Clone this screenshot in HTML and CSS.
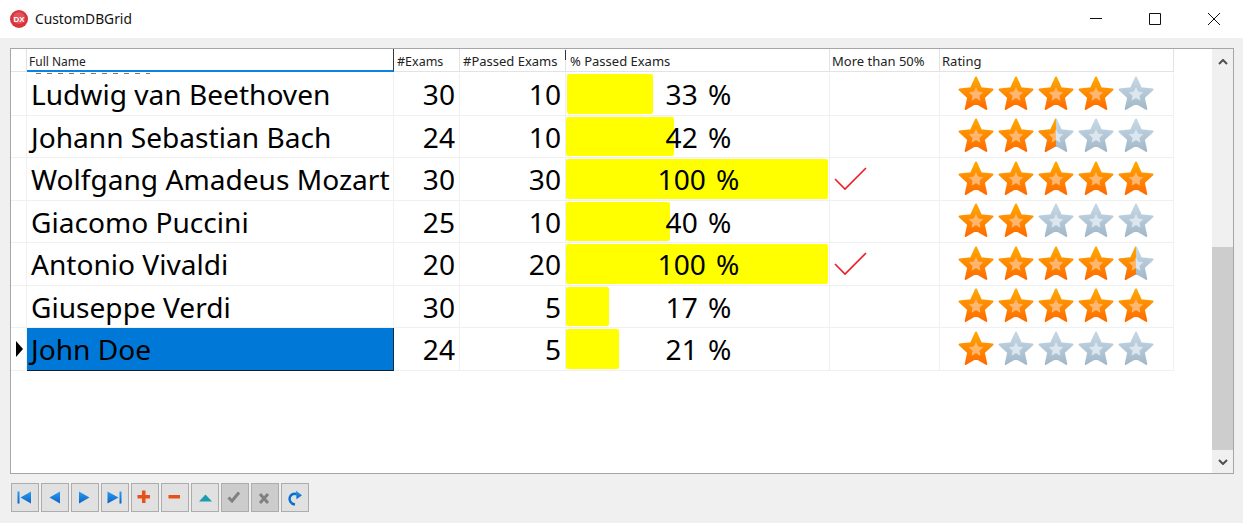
FILE: index.html
```html
<!DOCTYPE html>
<html lang="en">
<head>
<meta charset="utf-8">
<title>CustomDBGrid</title>
<link rel="stylesheet" href="styles.css">
</head>
<body>
<svg class="sprite" aria-hidden="true">
  <defs>
    <linearGradient id="gold" x1="0" y1="0" x2="0" y2="1"><stop offset="0" stop-color="#ffa800"/><stop offset="1" stop-color="#ff6c00"/></linearGradient>
    <linearGradient id="steel" x1="0" y1="0" x2="0" y2="1"><stop offset="0" stop-color="#c6d8e6"/><stop offset="1" stop-color="#a2b8c8"/></linearGradient>
    <linearGradient id="blue" x1="0" y1="0" x2="0" y2="1"><stop offset="0" stop-color="#2a9df0"/><stop offset="1" stop-color="#0a62c4"/></linearGradient>
    <clipPath id="lefthalf"><rect x="0" y="0" width="18" height="36"/></clipPath>
    <symbol id="star-on" viewBox="0 0 36 36">
      <path class="star-body-on" d="M18 1.500l5 10.800 11.500 1.300-8.700 7.800 2.500 11.600L18 27l-10.300 6 2.500-11.600-8.700-7.800L13 12.300z"/>
      <path fill="#ffb66f" d="M18 11l2.200 4.600 5 .7-3.700 3.400 1 5-4.500-2.600-4.500 2.600 1-5-3.700-3.400 5-.7z"/>
    </symbol>
    <symbol id="star-off" viewBox="0 0 36 36">
      <path class="star-body-off" d="M18 1.500l5 10.800 11.500 1.300-8.700 7.800 2.500 11.600L18 27l-10.300 6 2.500-11.600-8.700-7.800L13 12.300z"/>
      <path fill="#dbe6ee" d="M18 11l2.200 4.600 5 .7-3.700 3.400 1 5-4.500-2.600-4.500 2.600 1-5-3.700-3.400 5-.7z"/>
    </symbol>
    <symbol id="star-half" viewBox="0 0 36 36">
      <use href="#star-off" width="36" height="36"/>
      <g clip-path="url(#lefthalf)"><use href="#star-on" width="36" height="36"/></g>
    </symbol>
  </defs>
</svg>

<header class="titlebar">
  <svg class="app-icon" viewBox="0 0 18 18"><circle cx="9" cy="9" r="9" fill="#d8343c"/><circle cx="9" cy="8" r="6" fill="#e4525a"/><text x="9" y="11.500" class="app-icon-text">DX</text></svg>
  <span class="title">CustomDBGrid</span>
  <div class="win-controls">
    <svg class="win-btn" viewBox="0 0 12 12"><path d="M0 5.500h12" /></svg>
    <svg class="win-btn" viewBox="0 0 12 12"><path d="M.5.500h11v11H.5z" /></svg>
    <svg class="win-btn" viewBox="0 0 12 12"><path d="M0 0l12 12M12 0L0 12" /></svg>
  </div>
</header>

<main class="main">
  <section class="gridbox">
    <div class="table">
      <div class="row head">
        <div class="cell"></div>
        <div class="cell name-head">Full Name</div>
        <div class="cell exams-head">#Exams</div>
        <div class="cell">#Passed Exams</div>
        <div class="cell pct-head">% Passed Exams</div>
        <div class="cell tight">More than 50%</div>
        <div class="cell tight">Rating</div>
      </div>

      <div class="row">
        <div class="cell"></div><div class="cell name">Ludwig van Beethoven</div><div class="cell num">30</div><div class="cell num">10</div>
        <div class="cell pct first"><span class="bar" style="width:86px"></span><span class="pct-text">33 %</span></div>
        <div class="cell"></div>
        <div class="cell stars"><svg class="star"><use href="#star-on"/></svg><svg class="star"><use href="#star-on"/></svg><svg class="star"><use href="#star-on"/></svg><svg class="star"><use href="#star-on"/></svg><svg class="star"><use href="#star-off"/></svg></div>
      </div>

      <div class="row">
        <div class="cell"></div><div class="cell name">Johann Sebastian Bach</div><div class="cell num">24</div><div class="cell num">10</div>
        <div class="cell pct"><span class="bar" style="width:108px"></span><span class="pct-text">42 %</span></div>
        <div class="cell"></div>
        <div class="cell stars"><svg class="star"><use href="#star-on"/></svg><svg class="star"><use href="#star-on"/></svg><svg class="star"><use href="#star-half"/></svg><svg class="star"><use href="#star-off"/></svg><svg class="star"><use href="#star-off"/></svg></div>
      </div>

      <div class="row">
        <div class="cell"></div><div class="cell name">Wolfgang Amadeus Mozart</div><div class="cell num">30</div><div class="cell num">30</div>
        <div class="cell pct"><span class="bar" style="width:262px"></span><span class="pct-text">100 %</span></div>
        <div class="cell check"><svg class="tick" viewBox="0 0 34 24"><path d="M1 12l10 10L32 1"/></svg></div>
        <div class="cell stars"><svg class="star"><use href="#star-on"/></svg><svg class="star"><use href="#star-on"/></svg><svg class="star"><use href="#star-on"/></svg><svg class="star"><use href="#star-on"/></svg><svg class="star"><use href="#star-on"/></svg></div>
      </div>

      <div class="row">
        <div class="cell"></div><div class="cell name">Giacomo Puccini</div><div class="cell num">25</div><div class="cell num">10</div>
        <div class="cell pct"><span class="bar" style="width:104px"></span><span class="pct-text">40 %</span></div>
        <div class="cell"></div>
        <div class="cell stars"><svg class="star"><use href="#star-on"/></svg><svg class="star"><use href="#star-on"/></svg><svg class="star"><use href="#star-off"/></svg><svg class="star"><use href="#star-off"/></svg><svg class="star"><use href="#star-off"/></svg></div>
      </div>

      <div class="row">
        <div class="cell"></div><div class="cell name">Antonio Vivaldi</div><div class="cell num">20</div><div class="cell num">20</div>
        <div class="cell pct"><span class="bar" style="width:262px"></span><span class="pct-text">100 %</span></div>
        <div class="cell check"><svg class="tick" viewBox="0 0 34 24"><path d="M1 12l10 10L32 1"/></svg></div>
        <div class="cell stars"><svg class="star"><use href="#star-on"/></svg><svg class="star"><use href="#star-on"/></svg><svg class="star"><use href="#star-on"/></svg><svg class="star"><use href="#star-on"/></svg><svg class="star"><use href="#star-half"/></svg></div>
      </div>

      <div class="row">
        <div class="cell"></div><div class="cell name">Giuseppe Verdi</div><div class="cell num">30</div><div class="cell num">5</div>
        <div class="cell pct"><span class="bar" style="width:43px"></span><span class="pct-text">17 %</span></div>
        <div class="cell"></div>
        <div class="cell stars"><svg class="star"><use href="#star-on"/></svg><svg class="star"><use href="#star-on"/></svg><svg class="star"><use href="#star-on"/></svg><svg class="star"><use href="#star-on"/></svg><svg class="star"><use href="#star-on"/></svg></div>
      </div>

      <div class="row">
        <div class="cell indicator"><svg class="pointer" viewBox="0 0 7 16"><path d="M0 0l7 8-7 8z"/></svg></div><div class="cell name selected">John Doe</div><div class="cell num">24</div><div class="cell num">5</div>
        <div class="cell pct"><span class="bar" style="width:53px"></span><span class="pct-text">21 %</span></div>
        <div class="cell"></div>
        <div class="cell stars"><svg class="star"><use href="#star-on"/></svg><svg class="star"><use href="#star-off"/></svg><svg class="star"><use href="#star-off"/></svg><svg class="star"><use href="#star-off"/></svg><svg class="star"><use href="#star-off"/></svg></div>
      </div>
    </div>

    <div class="scrollbar">
      <div class="sb-btn"><svg class="sb-arrow" viewBox="0 0 10 6"><path d="M1 5l4-4 4 4"/></svg></div>
      <div class="sb-gap"></div>
      <div class="sb-thumb"></div>
      <div class="sb-btn sb-end"><svg class="sb-arrow" viewBox="0 0 10 6"><path d="M1 1l4 4 4-4"/></svg></div>
    </div>
  </section>

  <nav class="navigator">
    <button class="nav-btn"><svg class="nav-icon" viewBox="0 0 16 16"><path class="i-blue" d="M.5 1.500h2v12h-2zM14 1.500v12L3.500 7.500z"/></svg></button>
    <button class="nav-btn"><svg class="nav-icon" viewBox="0 0 16 16"><path class="i-blue" d="M13 1.500v12L2.500 7.500z"/></svg></button>
    <button class="nav-btn"><svg class="nav-icon" viewBox="0 0 16 16"><path class="i-blue" d="M2 1.500v12L12.500 7.500z"/></svg></button>
    <button class="nav-btn"><svg class="nav-icon" viewBox="0 0 16 16"><path class="i-blue" d="M.5 1.500v12L11.500 7.500zM12.500 1.500h2v12h-2z"/></svg></button>
    <button class="nav-btn"><svg class="nav-icon" viewBox="0 0 16 16"><path class="i-red" d="M5 .5h3.500V5H13v3.500H8.500V13H5V8.500H.5V5H5z"/></svg></button>
    <button class="nav-btn"><svg class="nav-icon" viewBox="0 0 16 16"><path class="i-red" d="M1.500 5H13v3.500H1.500z"/></svg></button>
    <button class="nav-btn"><svg class="nav-icon" viewBox="0 0 16 16"><path class="i-teal" d="M8.500 4.500L15 11.500H2z"/></svg></button>
    <button class="nav-btn off"><svg class="nav-icon" viewBox="0 0 16 16"><path class="i-grey" d="M1.500 7.500L5 11l7-8.500" /></svg></button>
    <button class="nav-btn off"><svg class="nav-icon" viewBox="0 0 16 16"><path class="i-grey" d="M3 4l8 9M11 4l-8 9" /></svg></button>
    <button class="nav-btn"><svg class="nav-icon" viewBox="0 0 16 16"><path class="i-arc" d="M8 14.500C3.500 14 1.500 10 3 6.800 4.300 4 7.500 3 10 4.500"/><path class="i-blue" d="M9 .8l6 4.400-5.500 4z"/></svg></button>
  </nav>
</main>
</body>
</html>
```

FILE: styles.css
```css
* { box-sizing: border-box; }

html, body {
  margin: 0;
  height: 100%;
}

body {
  width: 1243px;
  height: 523px;
  overflow: hidden;
  background: #f0f0f0;
  color: #000;
  font-family: "Noto Sans", "Open Sans", sans-serif;
}

.sprite {
  display: block;
  width: 0;
  height: 0;
}

/* Title bar */
.titlebar {
  display: flex;
  align-items: center;
  height: 38px;
  padding-left: 10px;
  background: #fff;
}

.app-icon {
  width: 18px;
  height: 18px;
}

.app-icon-text {
  font-family: "Liberation Sans", sans-serif;
  font-size: 8px;
  font-weight: 700;
  fill: #fff;
  text-anchor: middle;
}

.title {
  margin-left: 7px;
  padding-bottom: 2px;
  font-size: 13.800px;
  color: #111;
}

.win-controls {
  display: flex;
  gap: 47px;
  margin-left: auto;
  padding-right: 23px;
}

.win-btn {
  width: 12px;
  height: 12px;
  fill: none;
  stroke: #111;
  stroke-width: 1;
}

/* Main area */
.main {
  padding: 10px 9px 0 10px;
}

.gridbox {
  display: flex;
  justify-content: space-between;
  height: 426px;
  border: 1px solid #a6a6a6;
  background: #fff;
}

.table {
  width: 1163px;
}

.row {
  display: grid;
  grid-template-columns: 16px 367px 66px 106px 264px 110px 234px;
  grid-template-rows: minmax(0, 1fr);
  height: 42.500px;
}

.cell {
  border-right: 1px solid #f0f0f0;
  border-bottom: 1px solid #f0f0f0;
  min-width: 0;
  min-height: 0;
  white-space: nowrap;
}

/* Header */
.head {
  height: 23px;
  margin-bottom: 1px;
  font-size: 13px;
  line-height: 23px;
  color: #222;
}

.head .cell {
  padding-top: 1px;
  padding-left: 3px;
  border-color: #e3e3e3;
}

.head .name-head {
  position: relative;
  padding-left: 2px;
  font-size: 12px;
  border-right-color: #3a3a3a;
  border-bottom: 2px solid #0a84e0;
}

.head .exams-head {
  font-size: 12.500px;
}

.head .tight {
  padding-left: 2px;
}

.name-head::after {
  content: "";
  position: absolute;
  left: 9px;
  bottom: -4px;
  width: 114px;
  height: 1px;
  background: repeating-linear-gradient(90deg, #777 0 5px, transparent 5px 11px);
}

.head .pct-head {
  position: relative;
  padding-left: 4px;
}

.pct-head::before {
  content: "";
  position: absolute;
  left: -1px;
  top: 1px;
  width: 1px;
  height: 10px;
  background: #333;
}

/* Body cells */
.name,
.num,
.pct {
  font-size: 28.100px;
  line-height: 43px;
}

.name {
  padding-left: 4px;
}

.num {
  padding-right: 4px;
  text-align: right;
}

.selected {
  background: #0078d7;
  border-right-color: #1a2a3a;
  border-bottom-color: #10202e;
}

.indicator {
  display: flex;
  align-items: center;
  justify-content: center;
}

.pointer {
  width: 7px;
  height: 16px;
  margin-left: 2px;
}

/* Percent bar */
.pct {
  position: relative;
  padding-left: 2px;
  text-align: center;
  word-spacing: 3px;
}

.bar {
  position: absolute;
  left: 0;
  top: 1px;
  bottom: 1px;
  border-radius: 2px;
  background: #ffff00;
}

.first .bar {
  left: 1px;
}

.pct-text {
  position: relative;
}

.check {
  display: flex;
  align-items: center;
  padding-left: 4px;
}

.tick {
  width: 34px;
  height: 24px;
  fill: none;
  stroke: #ee1c25;
  stroke-width: 1.600;
}

/* Stars */
.stars {
  display: flex;
  align-items: center;
  gap: 4px;
  padding-left: 18px;
}

.star {
  width: 36px;
  height: 36px;
}

.star-body-on,
.star-body-off {
  stroke-width: 2;
  stroke-linejoin: round;
}

.star-body-on {
  fill: url(#gold);
  stroke: url(#gold);
}

.star-body-off {
  fill: url(#steel);
  stroke: url(#steel);
}

/* Scrollbar */
.scrollbar {
  display: flex;
  flex-direction: column;
  width: 21px;
  background: #f0f0f0;
}

.sb-btn {
  display: flex;
  align-items: center;
  justify-content: center;
  height: 26px;
}

.sb-end {
  flex: 1;
  height: auto;
}

.sb-arrow {
  width: 10px;
  height: 6px;
  fill: none;
  stroke: #505050;
  stroke-width: 2;
}

.sb-gap {
  height: 172px;
}

.sb-thumb {
  height: 203px;
  background: #cdcdcd;
}

/* Navigator */
.navigator {
  display: flex;
  gap: 2px;
  margin-top: 9px;
  padding-left: 1px;
}

.nav-btn {
  display: flex;
  align-items: center;
  justify-content: center;
  width: 28px;
  height: 29px;
  padding: 0;
  border: 1px solid #acacac;
  background: #e1e1e1;
}

.off {
  background: #cccccc;
}

.nav-icon {
  width: 16px;
  height: 16px;
}

.i-blue { fill: url(#blue); }
.i-red { fill: #e8501a; }
.i-teal { fill: #1b9cb0; }

.i-grey {
  fill: none;
  stroke: #808080;
  stroke-width: 3;
}

.i-arc {
  fill: none;
  stroke: #0a6fd0;
  stroke-width: 2.500;
}
```
